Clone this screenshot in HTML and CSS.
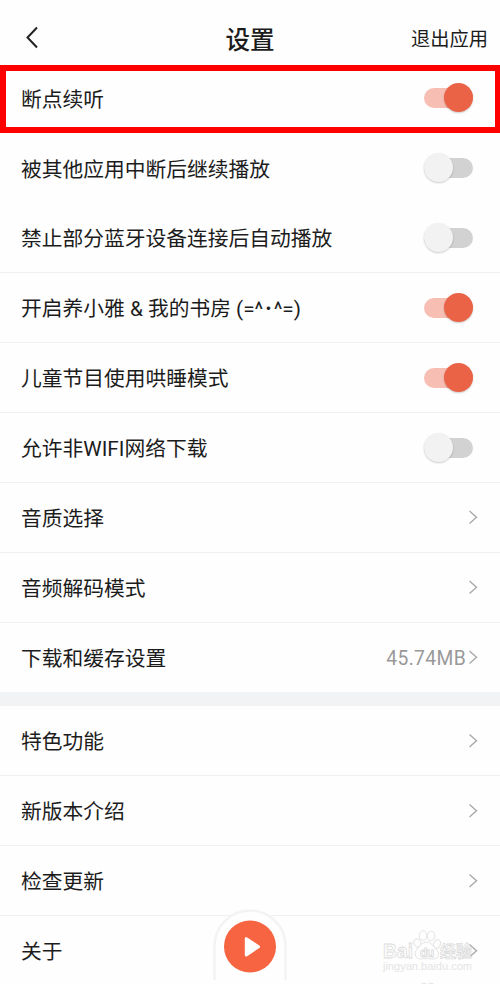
FILE: index.html
```html
<!DOCTYPE html>
<html lang="zh-CN">
<head>
<meta charset="utf-8">
<title>设置</title>
<link rel="stylesheet" href="styles.css">
</head>
<body>
<div class="screen">
  <header class="header">
    <svg class="back" width="14" height="24" viewBox="0 0 14 24"><path d="M12 1.5 2.5 11.5 12 21.5"/></svg>
    <h1 class="title">设置</h1>
    <span class="exit">退出应用</span>
  </header>
  <main>
    <section class="group">
      <div class="row plain highlighted"><span>断点续听</span><i class="switch on"></i></div>
      <div class="row plain"><span>被其他应用中断后继续播放</span><i class="switch"></i></div>
      <div class="row"><span>禁止部分蓝牙设备连接后自动播放</span><i class="switch"></i></div>
      <div class="row"><span>开启养小雅 &amp; 我的书房 (=^･^=)</span><i class="switch on"></i></div>
      <div class="row"><span>儿童节目使用哄睡模式</span><i class="switch on"></i></div>
      <div class="row"><span>允许非WIFI网络下载</span><i class="switch"></i></div>
      <div class="row"><span>音质选择</span><svg class="arrow" width="10" height="16" viewBox="0 0 10 16"><path d="M1.5 1 8.5 7.2 1.5 13.5"/></svg></div>
      <div class="row"><span>音频解码模式</span><svg class="arrow" width="10" height="16" viewBox="0 0 10 16"><path d="M1.5 1 8.5 7.2 1.5 13.5"/></svg></div>
      <div class="row last"><span>下载和缓存设置</span><span class="value">45.74MB</span><svg class="arrow" width="10" height="16" viewBox="0 0 10 16"><path d="M1.5 1 8.5 7.2 1.5 13.5"/></svg></div>
    </section>
    <section class="group second">
      <div class="row"><span>特色功能</span><svg class="arrow" width="10" height="16" viewBox="0 0 10 16"><path d="M1.5 1.5 8.5 7.7 1.5 14"/></svg></div>
      <div class="row"><span>新版本介绍</span><svg class="arrow" width="10" height="16" viewBox="0 0 10 16"><path d="M1.5 1.5 8.5 7.7 1.5 14"/></svg></div>
      <div class="row"><span>检查更新</span><svg class="arrow" width="10" height="16" viewBox="0 0 10 16"><path d="M1.5 1.5 8.5 7.7 1.5 14"/></svg></div>
      <div class="row plain"><span>关于</span><svg class="arrow" width="10" height="16" viewBox="0 0 10 16"><path d="M1.5 1.5 8.5 7.7 1.5 14"/></svg></div>
    </section>
  </main>
  <svg class="player" width="76" height="74" viewBox="0 0 76 74">
    <path class="dock" d="M2.5 72V38a35.5 35.5 0 0 1 71 0V72"/>
    <circle cx="38" cy="38.5" r="26"/>
    <path class="play" d="M34.3 30.7v16.2L46.5 38.8Z"/>
  </svg>
  <svg class="watermark" width="100" height="60" viewBox="0 0 100 60">
    <text class="brand" x="1" y="32" textLength="30" lengthAdjust="spacingAndGlyphs">Bai</text>
    <g class="paw">
      <ellipse cx="35.5" cy="17" rx="3.4" ry="4.4" transform="rotate(-20 35.5 17)"/>
      <ellipse cx="41" cy="9.5" rx="3.8" ry="4.8"/>
      <ellipse cx="49" cy="10" rx="3.8" ry="4.8" transform="rotate(10 49 10)"/>
      <ellipse cx="55" cy="18" rx="3.4" ry="4.4" transform="rotate(20 55 18)"/>
      <path d="M45 16c4 0 6 4 9 7 5 5 2 10-3 10-3 0-9-1-12 0-5 0-8-5-4-10 3-3 5-7 10-7Z"/>
    </g>
    <text class="du" x="38" y="31" textLength="14">du</text>
    <text class="cn" x="58" y="31" textLength="32">经验</text>
    <text class="url" x="1" y="44" textLength="89">jingyan.baidu.com</text>
    <g class="paw"><ellipse cx="42" cy="61" rx="3.5" ry="4"/><ellipse cx="49" cy="61" rx="3.5" ry="4"/></g>
  </svg>
</div>
</body>
</html>
```

FILE: styles.css
```css
* { box-sizing: border-box; }
body { margin: 0; background: #fefefe; }

.screen {
  position: relative;
  width: 500px;
  height: 984px;
  overflow: hidden;
  color: #1c1c1c;
  font-family: Roboto, "Noto Sans CJK SC", sans-serif;
  font-size: 20.75px;
}

.header {
  display: grid;
  grid-template-columns: 1fr auto 1fr;
  align-items: center;
  height: 63px;
  padding: 13px 12px 0 25px;
}
.back { fill: none; stroke: #222; stroke-width: 2; }
.title { margin: 0 0 0 -13px; padding-top: 5px; font-size: 24.6px; font-weight: 500; line-height: 36px; }
.exit { justify-self: end; font-size: 19.3px; }

.row {
  position: relative;
  display: flex;
  align-items: center;
  height: 70px;
  padding: 0 22px 0 21px;
  border-bottom: 1px solid #f0f0f0;
  white-space: nowrap;
}
.row > :first-child { flex: 1; padding-bottom: 2px; }
.group > .plain:nth-child(-n+2) > :first-child { padding-bottom: 0; }
.plain { border-bottom-color: transparent; }
.last { height: 69px; border-bottom: 0; }
.second { border-top: 14px solid #f2f3f5; }

.highlighted::after {
  content: "";
  position: absolute;
  inset: 2px 0 -1px;
  border: 6px solid #f00;
  border-right-width: 5px;
}

.switch {
  display: flex;
  align-items: center;
  width: 49px;
  height: 20px;
  margin-right: 5px;
  border-radius: 10px;
  background: #d2d2d2;
}
.switch::before {
  content: "";
  width: 29px;
  height: 29px;
  border-radius: 50%;
  background: #f2f2f2;
  box-shadow: 0 1px 2px rgba(0, 0, 0, .2);
}
.switch.on { justify-content: flex-end; background: #f7beb4; }
.switch.on::before { background: #ea6347; }

.arrow { fill: none; stroke: #aaa; stroke-width: 1.4; }
.value { color: #999; font-size: 19.3px; margin-right: 2px; padding-top: 1px; letter-spacing: .35px; }

.player { position: absolute; left: 212px; top: 908px; }
.dock { fill: #fefefe; stroke: #f3f3f3; stroke-width: 2.5; }
.player circle { fill: #f66442; }
.play { fill: #fff; stroke: #fff; stroke-width: 3; stroke-linejoin: round; }

.watermark { position: absolute; left: 382px; top: 926px; font-family: "Liberation Sans", "Noto Sans CJK SC", sans-serif; }
.watermark text, .paw { fill: #fefefe; stroke: #dcdcdc; stroke-width: .8; }
.watermark .brand { font-size: 20px; font-weight: 700; }
.watermark .du { font-size: 12px; font-weight: 700; }
.watermark .cn { font-size: 16px; font-weight: 700; }
.watermark .url { font-size: 11px; fill: #e4e4e4; stroke: none; }
```
